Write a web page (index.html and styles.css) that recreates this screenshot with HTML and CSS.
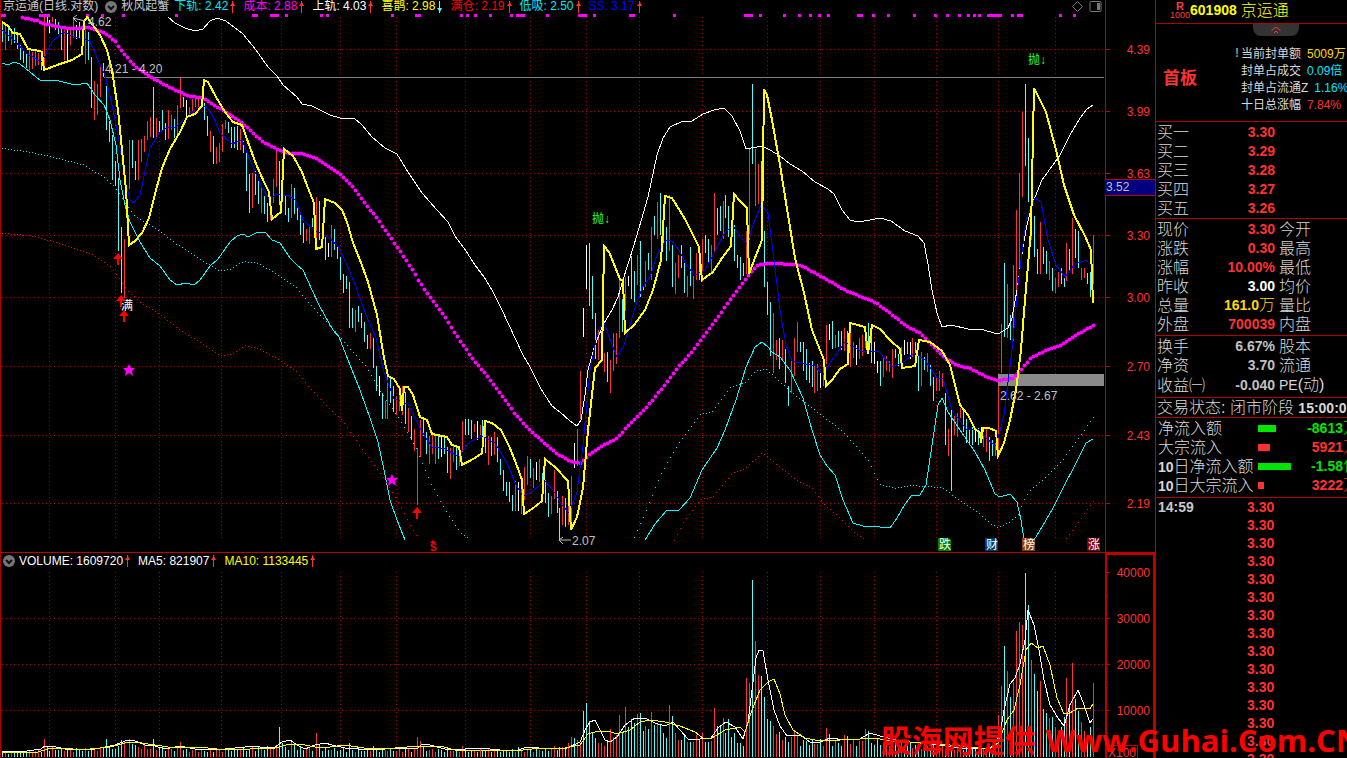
FILE: index.html
```html
<!DOCTYPE html>
<html lang="zh-CN">
<head>
<meta charset="utf-8">
<title>京运通 601908 日线</title>
<link rel="stylesheet" href="styles.css">
</head>
<body>
<div class="terminal">
  <main class="board">
    <section class="pane price-pane">
      <header class="legend">
        <span class="stock">京运通(日线.对数)</span>
        <button class="drop" aria-label="指标菜单"><svg viewBox="0 0 12 12"><circle cx="6" cy="6" r="6"/><path d="M3 5l3 3 3-3"/></svg></button>
        <span class="formula">秋风起蟹</span>
        <span class="item cyan">下轨: 2.42<i class="mark up"></i></span>
        <span class="item magenta">成本: 2.88<i class="mark up"></i></span>
        <span class="item white">上轨: 4.03<i class="mark up"></i></span>
        <span class="item yellow">喜鹊: 2.98<i class="mark down"></i></span>
        <span class="item red">满仓: 2.19<i class="mark up"></i></span>
        <span class="item cyan">低吸: 2.50<i class="mark up"></i></span>
        <span class="item blue">SS: 3.17<i class="mark up"></i></span>
        <span class="tools">
          <button class="tool" aria-label="标记"><svg viewBox="0 0 13 13"><path d="M6.5 1.5l5 5-5 5-5-5z"/></svg></button>
          <button class="tool" aria-label="侧栏"><svg viewBox="0 0 13 13"><rect x="1" y="1.500" width="11" height="10" rx="1"/><path class="solid" d="M8 3h3v7H8z"/></svg></button>
        </span>
      </header>
      <svg class="plot" id="price" viewBox="1 13 1104 539"></svg>
    </section>
    <svg class="axis price-axis" id="priceAxis" viewBox="1105 0 50 552"></svg>
    <section class="pane volume-pane">
      <header class="legend volume-legend">
        <button class="drop" aria-label="成交量菜单"><svg viewBox="0 0 12 12"><circle cx="6" cy="6" r="6"/><path d="M3 5l3 3 3-3"/></svg></button>
        <span class="item white">VOLUME: 1609720<i class="mark up"></i></span>
        <span class="item white">MA5: 821907<i class="mark up"></i></span>
        <span class="item yellow">MA10: 1133445<i class="mark up"></i></span>
      </header>
      <svg class="plot" id="volume" viewBox="1 569 1104 189"></svg>
    </section>
    <svg class="axis volume-axis" id="volumeAxis" viewBox="1105 555 48 203"></svg>
  </main>

  <aside class="quote">
    <header class="title"><span class="tag"><b>R</b><small>1000</small></span><b class="code">601908</b><span class="name">京运通</span></header>
    <section class="seal">
      <button class="fold" aria-label="收起"><svg viewBox="0 0 12 8"><path d="M1.500 4.500L6 1l4.500 3.500M4 7l2-2 2 2"/></svg></button>
      <strong class="board-tag">首板</strong>
      <dl class="seal-list">
        <div class="pinned"><dt>当前封单额</dt><dd class="gold">5009万</dd></div>
        <div><dt>封单占成交</dt><dd class="cyan">0.09倍</dd></div>
        <div><dt>封单占流通Z</dt><dd class="cyan">1.16%</dd></div>
        <div><dt>十日总涨幅</dt><dd class="rise">7.84%</dd></div>
      </dl>
    </section>
    <table class="rows">
      <tr><th>买一</th><td>3.30</td><th></th></tr>
      <tr><th>买二</th><td>3.29</td><th></th></tr>
      <tr><th>买三</th><td>3.28</td><th></th></tr>
      <tr><th>买四</th><td>3.27</td><th></th></tr>
      <tr><th>买五</th><td>3.26</td><th></th></tr>
    </table>
    <table class="rows">
      <tr><th>现价</th><td>3.30</td><th>今开</th></tr>
      <tr><th>涨跌</th><td>0.30</td><th>最高</th></tr>
      <tr><th>涨幅</th><td>10.00%</td><th>最低</th></tr>
      <tr><th>昨收</th><td class="white">3.00</td><th>均价</th></tr>
      <tr><th>总量</th><td class="gold">161.0<span class="unit">万</span></td><th>量比</th></tr>
      <tr><th>外盘</th><td>700039</td><th>内盘</th></tr>
    </table>
    <table class="rows">
      <tr><th>换手</th><td class="grey">6.67%</td><th>股本</th></tr>
      <tr><th>净资</th><td class="grey">3.70</td><th>流通</th></tr>
      <tr><th>收益㈠</th><td class="grey">-0.040</td><th><b class="pe">PE</b>(动)</th></tr>
    </table>
    <p class="status">交易状态: 闭市阶段 <b>15:00:01</b></p>
    <ul class="flows">
      <li class="fall"><span class="flow-name">净流入额</span><i class="bar" style="width:18px"></i><b>-8613<span class="unit">万</span></b></li>
      <li class="rise"><span class="flow-name">大宗流入</span><i class="bar" style="width:12px"></i><b>5921<span class="unit">万</span></b></li>
      <li class="fall"><span class="flow-name"><b>10</b>日净流入额</span><i class="bar" style="width:33px"></i><b>-1.58<span class="unit">亿</span></b></li>
      <li class="rise"><span class="flow-name"><b>10</b>日大宗流入</span><i class="bar" style="width:6px"></i><b>3222<span class="unit">万</span></b></li>
    </ul>
    <ol class="ticks">
      <li><time>14:59</time><b>3.30</b></li>
      <li><b>3.30</b></li><li><b>3.30</b></li><li><b>3.30</b></li><li><b>3.30</b></li>
      <li><b>3.30</b></li><li><b>3.30</b></li><li><b>3.30</b></li><li><b>3.30</b></li>
      <li><b>3.30</b></li><li><b>3.30</b></li><li><b>3.30</b></li><li><b>3.30</b></li>
      <li><b>3.30</b></li><li><b>3.30</b></li>
    </ol>
  </aside>
  <div class="watermark"><span>股海网提供</span><span>Www.Guhai.Com.CN</span></div>
</div>
<script src="chart.js"></script>
</body>
</html>
```

FILE: styles.css
```css
* { box-sizing: border-box; }
body {
  margin: 0;
  background: #000;
  color: #c8c8c8;
  font: 12px/13px "Liberation Sans", "Noto Sans CJK SC", sans-serif;
}
button { padding: 0; border: 0; background: none; }
svg { display: block; }
.terminal {
  position: relative;
  display: grid;
  grid-template-columns: minmax(0, 1fr) 192px;
  height: 100vh;
  overflow: hidden;
}
.cyan { color: #00e8ff; }
.magenta { color: #f0f; }
.white { color: #fff; }
.yellow { color: #ff0; }
.gold { color: #ffd800; }
.red { color: #f00; }
.blue { color: #00f; }
.grey { color: #c0c0c0; }
.rise { color: #ff3232; }
.fall { color: #00e600; }

.board {
  display: grid;
  grid-template-columns: minmax(0, 1fr) 50px;
  grid-template-rows: minmax(0, 553fr) minmax(0, 205fr);
  min-width: 0;
  min-height: 0;
  border-left: 1px solid #b00000;
}
.pane { display: flex; flex-direction: column; min-width: 0; min-height: 0; overflow: hidden; }
.price-pane, .price-axis { border-bottom: 1px solid #c00000; }
.plot { flex: 1; width: 100%; min-height: 0; }
.axis { width: 100%; height: 100%; }
.volume-axis { border-top: 2px solid #c00000; border-right: 2px solid #c00000; }

.legend { display: flex; align-items: center; height: 13px; padding-left: 2px; white-space: nowrap; }
.volume-legend { height: 16px; }
.drop { width: 12px; height: 12px; margin: 0 4px 0 7px; }
.volume-legend .drop { margin: 0 4px 0 0; }
.drop circle { fill: #777; }
.drop path { fill: none; stroke: #111; stroke-width: 2; }
.formula { margin-right: 5px; }
.item { display: flex; align-items: center; margin-right: 8px; }
.mark { position: relative; width: 5px; height: 12px; margin-left: 2px; background: linear-gradient(#ff3232, #ff3232) 2px 0 / 1px 12px no-repeat; }
.mark::before { content: ""; position: absolute; left: 0; top: 1px; border: solid transparent; border-width: 0 2px 4px 3px; border-bottom-color: #ff3232; }
.mark.down { background-image: linear-gradient(#54fcfc, #54fcfc); }
.mark.down::before { top: 7px; border-width: 4px 2px 0 3px; border-color: #54fcfc transparent transparent; }
.tools { display: flex; gap: 5px; margin-left: auto; padding-right: 3px; }
.tool { width: 13px; height: 13px; }
.tool path, .tool rect { fill: none; stroke: #777; }
.tool .solid { fill: #777; stroke: none; }

.crisp { shape-rendering: crispEdges; }
.grid { stroke: #b00000; stroke-dasharray: 1 3; }
.frame { stroke: #c00000; }
.level { stroke: #808080; }
.thick { stroke-width: 2; }
.line { fill: none; }
.note { fill: #c0c0c0; font-size: 12px; }
.sell { fill: #32ff32; font-size: 12px; }
.badge { fill: #fff; font-size: 12px; }
.scale { fill: #ff3232; font-size: 12px; text-anchor: end; }
.cursor { fill: #c0c0c0; font-size: 12px; }

.quote {
  display: flex;
  flex-direction: column;
  min-width: 0;
  min-height: 0;
  overflow: hidden;
  border-left: 1px solid #c00000;
  color: #d8d8d8;
  font-size: 16px;
  font-weight: 300;
  white-space: nowrap;
}
.quote b { font-size: 14px; font-weight: 700; }
.title { display: flex; flex: none; align-items: center; height: 24px; padding: 0 0 2px 14px; border-bottom: 1px solid #b00000; color: #ff0; }
.tag { display: flex; flex-direction: column; align-items: center; color: #ff3c3c; line-height: 9px; }
.quote .tag b { font-size: 11px; }
.tag small { font-size: 9px; line-height: 9px; font-weight: 400; }
.name { margin-left: 4px; }
.seal { display: grid; flex: none; grid-template-columns: 85px 1fr; grid-template-rows: 14px 1fr; height: 98px; border-bottom: 1px solid #b00000; }
.fold { grid-column: 1 / 3; display: flex; justify-content: center; align-items: center; width: 46px; height: 12px; margin-left: 97px; border-radius: 0 0 8px 8px; background: #333; }
.fold svg { width: 12px; height: 8px; fill: none; stroke: #ff3232; }
.board-tag { align-self: start; padding: 31px 0 0 7px; color: #ff3232; font-size: 17px; line-height: 20px; font-weight: 700; }
.seal-list { margin: 8px 0 0; font-size: 12px; line-height: 17px; font-weight: 400; }
.seal-list div { position: relative; display: flex; gap: 6px; }
.pinned::before { content: "!"; position: absolute; left: -6px; top: -1px; color: #999; font-weight: 700; }
.seal-list dd { margin: 0; }
.rows { flex: none; width: 100%; padding: 1px 0 0 1px; border-spacing: 0; border-bottom: 1px solid #b00000; table-layout: fixed; line-height: 19px; }
.rows + .rows { padding-bottom: 1px; }
.rows + .rows + .rows { padding-bottom: 2px; }
.rows tr { height: 19px; }
.rows th { width: 51px; padding: 0; font-weight: 300; text-align: left; }
.rows th:last-child { width: auto; padding-left: 4px; }
.rows td { width: 67px; padding: 0; font-size: 14px; font-weight: 700; text-align: right; color: #ff3232; }
.rows td.white { color: #fff; }
.rows td.gold { color: #ffd800; }
.rows td.grey { color: #c0c0c0; }
.unit { font-size: 16px; line-height: 14px; font-weight: 300; }
.rows .pe { font-weight: 400; }
.status { flex: none; height: 20px; margin: 0; padding-left: 1px; border-bottom: 1px solid #b00000; line-height: 19px; }
.flows { flex: none; margin: 0; padding: 1px 0 2px 2px; border-bottom: 1px solid #b00000; list-style: none; line-height: 19px; }
.flows li { display: flex; align-items: center; height: 19px; }
.flow-name { width: 100px; color: #d8d8d8; }
.bar { height: 7px; background: currentColor; }
.flows li > b { margin: 0 -12px 0 auto; }
.ticks { flex: 1; margin: 0; padding: 0 0 0 2px; list-style: none; min-height: 0; line-height: 18px; }
.ticks li { display: flex; height: 18px; }
.ticks time { width: 89px; font-size: 14px; font-weight: 700; color: #c8c8c8; }
.ticks b { color: #ff3232; }
.ticks li b:first-child { margin-left: 89px; }

.watermark {
  position: absolute;
  right: -14px;
  bottom: 0;
  display: flex;
  gap: 10px;
  color: #f00;
  font: 700 31px/36px "Open Sans", "Noto Sans CJK SC", sans-serif;
  white-space: nowrap;
}
```

FILE: chart.js
```js
const COLORS = { c: "#54fcfc", r: "#ff3232", w: "#ffffff" };
const MONTHS = [49,115,159,221,281,340,396,465,530,586,639,702,767,820,874,936,998,1055];

// x, colour key, high y, low y
const CANDLES = `2c22-42 5r23-50 8c25-41 11r29-45 14c28-43 17c32-49 20c45-60 23c50-63 26c53-68 29r50-70 32r52-69 35r50-66 38r53-65 41c52-70 44r17-70 47c17-25 49w20-33 52r17-22 55c19-30 58c22-34 61c28-50 64r30-60 67w30-60 70r27-45 73r18-38 76w25-39 79c22-38 82w28-44 85r30-64 88c32-60 91c57-108 94r81-120 97r84-115 100r65-97 103c63-77 106c86-130 109c121-142 112c135-180 115c161-186 118c178-251 121c227-293 124r239-298 129r140-189 132c140-168 135c161-180 138r140-180 141r139-162 144r136-152 147r121-140 150r117-137 153c87-138 156r118-137 159c121-133 162c110-130 165c123-140 168r110-139 171r115-130 174c119-138 177r105-134 180r78-108 183c97-107 186w100-117 189r107-115 192r99-114 195r95-107 198r99-108 201r96-107 204c103-120 207c116-136 210r131-152 213c136-164 216r147-164 219r143-162 222r124-152 225r120-129 228c122-133 231c127-148 234c127-148 237c126-150 240r129-150 243c141-153 246c150-191 249c174-213 252r173-208 255c171-195 258c180-204 261r188-213 264c196-214 267c203-222 270r196-220 273r179-203 276r149-187 279c161-205 282c176-202 285c195-215 288c208-222 291r184-218 294c188-214 297c205-220 300c214-235 303c223-243 306r229-241 309r225-244 312c218-227 316r197-248 319c201-240 322c223-235 325c237-260 328w243-257 331r225-257 334c229-250 337c247-259 340c257-280 343c274-293 346c276-289 349c282-328 352c308-328 355r310-332 358c306-322 361c313-328 364c322-342 367c335-349 370r333-349 373c338-368 376c366-391 379w376-396 382c393-419 385r401-419 387r376-419 390c377-403 393c386-412 396r396-415 399r390-411 402r386-415 405c392-424 408r408-432 411c416-440 414r429-451 417r448-505 420r420-457 423c420-436 426c432-454 429r436-464 432r435-454 435r435-464 438c436-459 441w437-457 444c438-454 447c447-473 450r448-479 453r444-462 456c447-470 459r448-466 462r421-452 465c419-435 468c419-435 471c420-439 474r424-432 477w421-440 480r425-435 482c420-440 485c420-453 488r436-465 491c437-456 494r432-455 497c437-462 500c459-475 503c470-491 506c482-496 509c482-502 512c495-511 515r481-511 518w482-511 521r478-514 524r467-500 527r456-485 530c459-478 533r468-488 536w462-480 539r459-482 542c473-500 545c480-503 548c493-517 551r496-514 554r470-499 557c491-513 559c508-540 562r496-525 565c498-527 568r503-525 571r476-530 574w443-468 577r429-466 580r371-419 583w308-337 586w245-289 589c243-306 592c276-319 595c313-359 598r330-360 601r335-362 604r353-372 607c352-382 610r360-393 613r333-371 616r333-364 619r280-338 622c299-332 625r277-311 628w276-286 631c256-299 634c271-302 637r255-285 640c241-297 643c285-290 645r261-287 648c253-270 651r227-280 654c216-235 657r202-239 660c193-235 663c222-245 666c227-261 669r195-251 672c245-287 675r263-294 678r255-278 681c245-268 684c263-293 687r276-297 690c247-286 693r276-299 696r253-280 699c257-280 702r239-272 705c235-253 708c239-264 711r245-272 714r193-251 717c208-235 720c206-231 723r201-239 725c195-218 728c206-237 731c222-244 734c225-261 737c255-268 740c257-280 743c263-276 746r231-274 749r148-240 752c84-164 755r149-206 758r164-204 761c161-205 764c231-287 767c282-315 770c302-356 773r313-373 776r340-360 779c338-369 782r340-361 785c349-383 788c386-406 791r361-393 794r338-376 797r322-352 800c342-352 803c342-371 806c349-380 809c363-383 812c361-387 814r365-393 817r364-391 820w371-388 823r357-386 826r325-364 829w324-340 832c321-349 835r335-348 838c331-347 841c331-350 844r328-351 847c331-360 850r323-367 853r342-358 856w345-365 859r338-359 862r335-356 865r328-348 868c323-348 871c330-363 874w342-364 877w361-373 880c361-386 883r356-377 886r356-371 889r361-372 892r349-378 895c349-358 898c354-366 901r347-366 904w340-355 907c342-354 910w342-359 912r338-357 915c342-365 918c356-391 921r352-386 924c357-370 927r353-372 930c365-386 933c377-401 936r377-391 939r371-391 942r373-387 945c393-445 948r429-456 951c408-491 954r416-435 957r413-437 960r408-418 963c411-432 966c419-443 969c429-443 972c427-445 975w428-442 978c428-445 981w427-438 983r434-447 986r427-452 989c437-461 992c440-456 995r443-456 998r386-455 1001r324-373 1004c263-337 1007r284-338 1010c315-340 1013r265-341 1016r210-291 1019r173-268 1022r112-197 1025c84-166 1028c138-202 1031r213-240 1034c216-257 1037c249-274 1040r222-274 1043c247-264 1046c251-274 1049r261-280 1052c268-291 1055r278-293 1058r272-287 1061c268-284 1064c278-287 1066r243-281 1069c249-272 1072r218-274 1075c229-258 1078c231-268 1081r268-280 1084r268-278 1087c273-284 1090c272-297 1093r235-284`
  .split(" ").map(s => { const m = s.match(/(\d+)([crw])(\d+)-(\d+)/); return { x: +m[1], k: m[2], hi: +m[3], lo: +m[4] }; });

const UPPER = "168,17 175,23 185,28 195,31 203,29 210,21 217,18 226,21 243,34 256,50 268,67 277,76 283,85 297,97 302,104 312,106 330,115 340,118 354,118 362,125 372,137 385,148 397,154 408,172 422,193 437,210 448,222 455,236 466,251 475,265 484,277 492,290 502,310 509,325 523,355 530,367 541,389 552,406 560,412 570,421 577,426 581,420 585,395 588,370 595,345 603,325 612,310 618,297 623,280 634,245 639,228 648,197 657,155 663,138 670,127 681,122 692,121 703,114 714,110 724,108 732,116 740,131 746,149 762,146 770,150 780,156 790,164 802,171 815,182 828,189 834,194 842,210 850,220 858,222 870,220 880,218 891,221 905,231 918,236 924,243 928,264 932,290 937,313 942,327 951,325 968,329 980,329 998,334 1008,328 1012,318 1017,290 1023,247 1027,225 1033,202 1042,180 1050,169 1060,155 1070,135 1080,118 1087,109 1093,105";
const LOWER = [
  "2,63 8,65 14,62 20,64 30,72 41,81 55,80 75,85 87,83 95,95 104,105 110,120 116,145 120,180 125,205 130,222 140,242 150,258 160,266 170,280 177,285 186,283 194,285 200,280 210,266 218,259 230,242 237,236 243,234 248,237 258,232 265,232 272,240 280,243 290,258 297,265 303,270 312,290 320,307 333,330 339,337 348,360 360,390 370,418 378,442 384,470 390,500 397,520 405,540",
  "645,540 655,524 667,510 679,510 690,498 702,470 717,448 725,430 736,400 746,367 755,347 762,342 768,347 772,352 780,357 790,370 803,398 812,430 820,455 827,466 835,475 843,500 853,523 863,526 880,527 890,528 897,518 905,504 912,495 920,495 926,485 932,445 938,405 942,398 948,412 960,430 975,452 985,470 995,494 1000,497 1010,494 1017,502 1021,520 1024,540",
  "1034,540 1042,527 1053,508 1063,488 1075,465 1086,443 1093,439"];
const LOW_DOTS = [
  "2,148 25,151 50,156 85,165 105,178 115,187 125,203 133,214 145,222 160,231 175,243 190,252 205,262 218,270 230,269 243,261 258,263 270,270 285,280 297,288 303,296 320,315 335,331 350,349 365,365 382,394 400,420 415,446 430,482 445,510 460,532 468,538",
  "634,537 645,512 660,475 675,448 690,427 700,414 712,411 730,387 745,382 755,371 765,368 775,377 790,391 802,400 820,414 840,429 855,445 868,460 875,475 880,484 895,488 910,485 925,486 942,487 955,497 975,510 990,523 998,527 1010,521 1018,514 1023,500 1030,490 1045,477 1062,460 1075,442 1093,417"];
const RED_DOTS = [
  "2,233 30,235 60,243 90,253 110,266 118,277 127,290 140,302 160,314 180,330 200,342 220,355 232,354 245,345 260,349 280,360 295,370 310,388 330,409 342,420 355,439 370,460 385,480 400,505 410,525 418,538",
  "674,540 683,522 700,499 712,497 732,473 745,468 762,452 775,463 795,479 812,488 823,503 840,518 855,533 863,538",
  "1066,538 1080,519 1093,501"];
const COST = "22,17 36,20 44,23 55,26 70,28 88,27 105,33 115,41 123,53 135,66 148,75 160,82 175,90 190,96 204,98 216,106 228,113 240,121 252,132 262,141 275,148 288,153 300,153 318,159 330,167 340,174 352,186 365,203 378,220 390,237 402,254 413,271 420,283 432,300 445,317 458,338 472,358 488,377 500,393 515,414 528,428 543,442 556,453 570,461 580,463 588,455 600,446 615,439 630,423 645,408 660,390 675,370 690,353 705,333 720,313 735,292 750,272 758,264 770,263 795,264 803,266 815,273 828,280 845,290 860,296 875,302 890,313 905,325 920,333 935,348 945,358 957,365 970,368 985,376 998,380 1012,378 1020,370 1030,358 1045,350 1058,346 1070,338 1082,331 1093,325";
const MAGPIE = "2,22 8,26 13,33 20,34 28,49 40,51 42,52 44,70 60,64 72,60 82,54 84,22 87,17 92,24 100,35 107,50 112,70 118,110 122,150 126,190 129,245 135,241 142,233 149,218 156,190 162,168 170,149 180,132 187,117 195,114 202,106 204,80 208,82 216,97 225,112 233,122 242,125 248,142 256,164 264,182 269,192 272,219 281,212 284,149 293,156 302,172 308,188 314,203 316,249 322,247 325,199 335,203 342,210 347,222 353,243 360,260 368,282 377,315 384,358 388,376 394,379 400,389 402,411 404,387 408,387 413,395 420,417 427,420 432,434 447,437 452,445 459,447 462,465 475,458 482,453 485,421 492,423 501,430 510,448 517,466 522,480 524,514 532,509 542,501 545,459 555,467 568,481 571,530 577,517 583,488 588,430 595,368 602,360 604,246 609,252 620,279 623,281 625,333 634,325 645,310 653,290 661,260 665,196 672,198 685,219 699,247 702,280 713,272 722,258 731,246 734,194 740,201 747,208 749,274 755,258 762,240 764,89 767,95 772,120 780,165 788,215 795,258 804,293 812,330 820,350 824,360 826,386 832,380 840,369 848,364 850,323 865,327 868,354 872,325 880,329 890,340 900,349 902,368 915,366 919,340 930,342 942,351 950,365 960,405 968,415 975,429 980,433 981,443 983,428 989,428 996,431 998,456 1004,443 1010,420 1016,390 1021,350 1025,300 1031,230 1034,88 1046,112 1056,150 1064,185 1074,215 1085,236 1091,250 1093,303";
const SS = "2,30 14,40 27,54 42,62 52,42 63,32 75,37 90,41 98,60 105,75 112,105 118,135 125,180 130,200 134,203 140,195 150,148 160,132 168,127 176,127 185,118 200,106 206,106 214,118 220,133 232,144 242,140 250,160 262,188 270,200 276,194 290,196 295,200 303,220 314,230 328,237 338,246 347,265 356,287 366,315 376,338 384,372 394,399 408,404 422,432 432,447 445,449 458,456 470,442 482,436 495,443 508,465 516,485 523,496 533,491 545,481 553,490 562,505 569,513 577,492 583,445 590,370 598,330 604,323 612,345 617,357 624,345 635,308 642,288 650,277 657,255 665,241 671,240 679,250 687,266 695,275 705,270 715,251 725,232 733,226 740,237 747,244 753,225 761,205 768,213 774,260 780,310 786,345 792,361 805,364 815,366 823,375 832,360 845,342 861,351 878,351 893,367 905,361 914,353 925,360 937,378 943,379 952,410 966,429 978,429 988,440 996,446 1004,415 1012,350 1018,285 1026,220 1035,198 1041,202 1048,240 1056,265 1065,277 1075,264 1087,260 1093,270";
const SIGNALS = "1,5 39,11 86,3 101,3 122,3 175,3 252,6 270,9 285,3 320,3 326,3 391,3 415,6 460,3 466,3 474,3 489,3 510,3 516,9 546,3 578,9 593,3 629,6 673,3 744,9 759,3 783,3 798,3 809,3 818,3 827,3 857,6 872,3 887,3 913,3 934,3 946,3 958,3 967,3 973,3 978,3 987,15 1011,3 1017,6 1059,3 1073,3";

// volume bar heights in plot units; quiet stretches follow the base profile
const VOLUME_BASE = "2,4 38,6 50,8 80,7 105,8 135,10 200,6 240,8 290,9 350,7 400,7 430,7 500,6 540,7 560,9 580,14 590,30 640,30 700,18 742,12 776,23 800,15 850,14 880,15 920,11 960,9 995,7 1000,60 1060,32 1090,28 1093,60";
const VOLUME_PEAKS = "44:18 47:10 106:18 121:17 124:16 127:20 129:18 132:13 153:18 180:15 278:30 282:14 290:17 294:12 316:24 319:13 349:14 373:11 417:20 420:16 423:11 462:11 518:10 554:11 571:20 574:19 577:17 580:14 583:46 586:54 589:36 592:24 595:19 598:14 601:14 604:11 607:15 610:28 613:20 616:22 619:42 622:25 625:50 628:30 631:38 634:34 637:43 640:44 643:26 646:31 648:28 651:45 654:32 657:34 660:32 663:24 666:19 669:52 672:41 675:24 678:17 681:17 684:22 687:15 690:15 693:15 696:22 699:18 702:24 705:15 708:15 711:16 714:49 717:31 720:31 723:39 725:24 728:38 731:20 734:24 737:14 740:14 743:11 746:79 749:74 752:177 755:116 758:82 761:81 764:60 767:38 770:36 773:31 776:23 779:25 782:17 785:20 788:15 791:20 794:26 797:22 826:29 829:23 844:22 847:21 865:28 868:26 998:42 1001:71 1004:111 1007:86 1010:60 1013:75 1016:126 1019:135 1022:132 1025:184 1028:152 1031:97 1034:83 1037:66 1040:76 1043:48 1046:44 1049:39 1052:40 1055:30 1058:26 1061:30 1064:40 1066:79 1069:53 1072:94 1075:58 1078:46 1081:35 1084:26 1087:20 1090:30 1093:74"
  .split(" ").map(s => s.split(":").map(Number));
const MA5 = "2,751 20,752 41,749 45,746 56,747 70,750 95,749 115,745 128,740 133,740 145,745 155,746 165,749 180,746 200,750 225,749 255,746 265,748 275,747 282,742 290,740 297,745 305,749 315,745 325,743 332,745 345,748 370,750 400,748 418,748 422,744 430,745 445,749 465,749 480,748 500,750 518,750 527,747 550,749 567,748 580,742 586,728 590,722 595,720 600,730 605,740 610,742 617,737 625,725 635,718 645,718 655,723 665,726 673,722 680,730 688,739 700,739 711,738 718,728 726,722 735,727 743,739 748,722 752,690 756,658 759,650 763,651 768,680 774,710 780,726 787,736 800,735 810,742 818,743 830,738 845,740 860,739 870,733 880,736 900,741 930,744 960,748 990,749 1000,735 1004,710 1010,684 1015,678 1020,664 1025,640 1028,610 1034,625 1039,650 1044,680 1050,705 1058,718 1064,726 1070,705 1078,690 1083,702 1090,723 1093,719";
const MA10 = "2,752 38,752 48,749 65,748 80,750 110,747 125,743 135,742 155,745 175,748 200,747 225,750 250,749 275,748 290,744 300,744 315,747 330,747 345,745 370,749 395,748 420,746 440,746 455,750 480,750 515,751 540,748 565,748 580,745 588,734 598,731 608,731 617,734 630,730 640,722 650,720 665,722 680,726 695,732 703,738 712,738 725,730 740,727 745,732 752,710 760,690 768,682 774,679 780,694 785,715 793,730 805,738 820,741 840,740 860,739 875,738 890,741 930,743 960,746 990,749 998,743 1007,720 1014,710 1020,685 1026,650 1031,643 1038,648 1043,646 1050,665 1057,698 1064,714 1070,713 1078,708 1090,709 1093,704";

const line = (x1, y1, x2, y2, cls) => `<line class="${cls}" x1="${x1}" y1="${y1}" x2="${x2}" y2="${y2}"/>`;
const curve = (pts, color, width) => `<polyline class="line crisp" points="${pts}" stroke="${color}" stroke-width="${width}"/>`;
const pairs = s => s.split(" ").map(p => p.split(",").map(Number));
function valueAt(points, x) {
  for (let i = 1; i < points.length; i++) {
    const [x0, y0] = points[i - 1], [x1, y1] = points[i];
    if (x <= x1) return y0 + (y1 - y0) * Math.max(0, x - x0) / (x1 - x0);
  }
  return points[points.length - 1][1];
}
const buyArrow = (x, y) => `<path fill="#f00" d="M${x} ${y}l5 6h-4v6h-2v-6h-4z"/>`;
const star = (x, y) => `<path fill="#f0f" d="M${x} ${y - 6}l2 4h4l-3 3 1 5-4-3-4 3 1-5-3-3h4z"/>`;
const badge = (x, color, t) => `<path fill="${color}" d="M${x} 538h11l2 2v11h-13z"/><text class="badge" x="${x + 1}" y="549">${t}</text>`;

function drawPrice() {
  let s = "";
  for (const y of [49,111,173,235,297,366,435,503]) s += line(2, y + .5, 1104, y + .5, "grid crisp");
  for (const x of MONTHS) s += line(x + .5, 17, x + .5, 539, "grid crisp");
  s += line(104, 77.5, 1104, 77.5, "level crisp");
  s += `<rect x="998" y="374" width="106" height="12" fill="#8a8a8a"/>`;
  for (const [x, w] of pairs(SIGNALS)) s += `<rect x="${x}" y="14" width="${w}" height="3" fill="#f0f"/>`;
  for (const c of CANDLES) s += `<rect class="crisp" x="${c.x}" y="${c.hi}" width="1" height="${c.lo - c.hi}" fill="${COLORS[c.k]}"/>`;
  s += curve(UPPER, "#fff", 1);
  for (const p of LOWER) s += curve(p, "#0ff", 1);
  for (const [set, color] of [[LOW_DOTS, "#00e8ff"], [RED_DOTS, "#f00"]])
    for (const p of set) {
      const pts = pairs(p);
      for (let x = pts[0][0]; x <= pts[pts.length - 1][0]; x += 3)
        s += `<rect class="crisp" x="${x}" y="${Math.round(valueAt(pts, x))}" width="1" height="1" fill="${color}"/>`;
    }
  const cost = pairs(COST);
  for (let x = 22; x <= 1093; x += 3) s += `<circle cx="${x + .5}" cy="${Math.round(valueAt(cost, x)) + .5}" r="2" fill="#f0f"/>`;
  s += curve(SS, "#00f", 1) + curve(MAGPIE, "#ff0", 2);
  s += `<path class="line" stroke="#c0c0c0" d="M77 15l-4 3 4 4M73 18l12 3M563 537l-4 3 4 4M559 540h12"/>`;
  s += `<text class="note" x="88" y="26">4.62</text><text class="note" x="105" y="73">4.21 - 4.20</text><text class="note" x="572" y="545">2.07</text><text class="note" x="1000" y="400">2.62 - 2.67</text>`;
  s += `<text class="sell" x="592" y="223">抛↓</text><text class="sell" x="1028" y="64">抛↓</text><text class="badge" x="121" y="310">满</text>`;
  s += buyArrow(118, 253) + buyArrow(121, 295) + buyArrow(124, 310) + buyArrow(417, 507) + star(129, 370) + star(392, 480);
  s += `<path fill="#f00" d="M433 540l3 3h-6z"/><text x="430" y="551" fill="#f00" font-size="10" font-weight="700">S</text>`;
  s += badge(938, "#008000", "跌") + badge(985, "#003a70", "财") + badge(1022, "#8a4000", "榜") + badge(1087, "#800000", "涨");
  document.getElementById("price").innerHTML = s;
}

function drawVolume() {
  let s = "";
  const base = pairs(VOLUME_BASE);
  for (const y of [618,664,710]) s += line(2, y + .5, 1104, y + .5, "grid crisp");
  for (const x of MONTHS) s += line(x + .5, 572, x + .5, 757, "grid crisp");
  CANDLES.forEach((c, i) => {
    const peak = VOLUME_PEAKS.find(p => Math.abs(p[0] - c.x) <= 1);
    const h = peak ? peak[1] : Math.round(valueAt(base, c.x) * (1 + .25 * Math.sin(i * 2.3)));
    s += `<rect class="crisp" x="${c.x}" y="${757 - h}" width="1" height="${h}" fill="${COLORS[c.k === "w" ? "c" : c.k]}"/>`;
  });
  s += curve(MA5, "#fff", 1) + curve(MA10, "#ff0", 1);
  document.getElementById("volume").innerHTML = s;
}

function drawAxes() {
  let s = line(1105.5, 0, 1105.5, 552, "frame crisp");
  [[49,"4.39"],[111,"3.99"],[173,"3.63"],[235,"3.30"],[297,"3.00"],[366,"2.70"],[435,"2.43"],[503,"2.19"]].forEach(([y, t]) => {
    s += line(1105, y + .5, 1110, y + .5, "frame crisp") + `<text class="scale" x="1150" y="${y + 5}">${t}</text>`;
  });
  s += `<rect class="crisp" x="1105" y="179" width="50" height="17" fill="#c00000"/><rect class="crisp" x="1105" y="180" width="50" height="15" fill="#000080"/><text class="cursor" x="1106" y="191">3.52</text>`;
  document.getElementById("priceAxis").innerHTML = s;
  s = line(1106, 555, 1106, 758, "frame thick crisp");
  [[572,"40000"],[618,"30000"],[664,"20000"],[710,"10000"]].forEach(([y, t]) => {
    s += line(1106, y + .5, 1110, y + .5, "frame crisp") + line(1106, y + 23.5, 1108, y + 23.5, "frame crisp") + `<text class="scale" x="1150" y="${y + 5}">${t}</text>`;
  });
  s += `<path class="line frame crisp" d="M1107 745.500h30.500v13"/><text class="scale" x="1136" y="757">X100</text>`;
  document.getElementById("volumeAxis").innerHTML = s;
}

drawPrice();
drawVolume();
drawAxes();
```
